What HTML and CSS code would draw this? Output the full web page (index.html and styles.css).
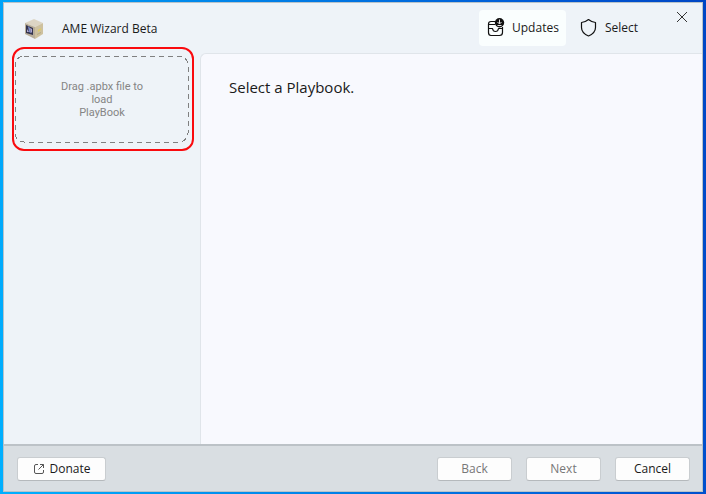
FILE: index.html
```html
<!DOCTYPE html>
<html lang="en">
<head>
<meta charset="utf-8">
<meta name="viewport" content="width=device-width, initial-scale=1">
<title>AME Wizard Beta</title>
<link rel="stylesheet" href="styles.css">
</head>
<body>
<div class="window">
  <div class="main">
    <aside class="sidebar">
      <header class="brand">
        <svg class="brand-icon" viewBox="0 0 20 20" aria-hidden="true">
          <path fill="#ddd5c4" d="M10 0 19 4 11 8 1 4z"/>
          <path fill="#b9ae99" d="M1 4 11 8 11 20 1 15z"/>
          <path fill="#cec19f" d="M11 8 19 4 19 15 11 20z"/>
          <path fill="#34344e" d="M2 6 9 9 9 16 2 14z"/>
          <path fill="#7d8dcc" d="M4 7 6 9 7 14 5 13z"/>
          <path fill="#b0a9cf" d="M6 9 8 10 8 13 7 14zM3 10 5 13 3 13z"/>
          <path fill="#ddcb68" d="M14 11 17 9 17 11 14 13z"/>
          <path fill="#b5a982" d="M13 15 17 13 17 14 13 16z"/>
        </svg>
        <span>AME Wizard Beta</span>
      </header>
      <div class="highlight">
        <div class="dropzone">
          <svg class="dropzone-outline" aria-hidden="true"><rect width="100%" height="100%" rx="9"/></svg>
          <p>Drag .apbx file to<br>load<br>PlayBook</p>
        </div>
      </div>
    </aside>
    <div class="workspace">
      <nav class="toolbar">
        <button class="tool active" type="button">
          <svg class="tool-icon" viewBox="0 0 18 20" aria-hidden="true">
            <g fill="none" stroke="#111" stroke-width="1.2" stroke-linejoin="round">
              <path d="M8 3.500H4Q1.500 3.500 1.500 6V14.500Q1.500 17.500 4 17.500H12.500Q15.500 17.500 15.500 14.500V9"/>
              <path d="M2 6.500H8M1.500 10.500H5.500Q6 13.500 8.500 13.500T11.500 10.500H15.500"/>
            </g>
            <circle cx="12.500" cy="4.700" r="4.700" fill="#111"/>
            <path d="M12.500 1.500V5.500M10.500 4 12.500 6 14.500 4M10.500 7.500H14.500" fill="none" stroke="#fff" stroke-width="0.900"/>
          </svg>
          <span>Updates</span>
        </button>
        <button class="tool" type="button">
          <svg class="tool-icon" viewBox="0 0 18 20" aria-hidden="true">
            <path fill="none" stroke="#111" stroke-width="1.200" stroke-linejoin="round" d="M8.500 1.500Q11.500 4 15.500 4.500V9.500Q15.500 15 8.500 18Q1.500 15 1.500 9.500V4.500Q5.500 4 8.500 1.500z"/>
          </svg>
          <span>Select</span>
        </button>
        <button class="close" type="button" aria-label="Close">
          <svg viewBox="0 0 12 12" aria-hidden="true"><path d="M1 1 11 11M11 1 1 11"/></svg>
        </button>
      </nav>
      <main class="content"><h1>Select a Playbook.</h1></main>
    </div>
  </div>
  <footer class="footer">
    <button class="btn donate" type="button">
      <svg class="link-icon" viewBox="0 0 12 12" aria-hidden="true"><path d="M5 1.500H3Q1.500 1.500 1.500 3V9Q1.500 10.500 3 10.500H9Q10.500 10.500 10.500 9V7M7 1.500H10.500V5M10.500 1.500 5.500 6.500"/></svg>
      <span>Donate</span>
    </button>
    <button class="btn" type="button" disabled>Back</button>
    <button class="btn" type="button" disabled>Next</button>
    <button class="btn" type="button">Cancel</button>
  </footer>
</div>
</body>
</html>
```
FILE: styles.css
```css
* { box-sizing: border-box; }

body {
  margin: 0;
  min-height: 100vh;
  display: flex;
  padding: 2px 3px;
  background: linear-gradient(80deg, #00b0ff 0%, #008eee 30%, #0058d4 80%, #0046c4 100%);
  color: #1a1a1a;
  font: 12px/16px "Open Sans", "Noto Sans", sans-serif;
}

button {
  font: inherit;
  color: inherit;
  border: 0;
  padding: 0;
  background: none;
}

.window {
  flex: 1;
  display: flex;
  flex-direction: column;
  border: 1px solid #b9c3c9;
  background: #eef3f8;
}

.main {
  flex: 1;
  display: grid;
  grid-template-columns: 196px 1fr;
}

.brand {
  height: 44px;
  padding: 8px 0 0 20px;
  display: flex;
  align-items: center;
  gap: 18px;
}

.brand-icon { width: 20px; height: 20px; }

.highlight {
  margin: 0 6px 0 8px;
  padding: 7px 3px 6px 1px;
  border: 2px solid #fa0a0e;
  border-radius: 12px;
}

.dropzone {
  position: relative;
  height: 87px;
  display: grid;
  place-items: center;
  color: #858585;
  font-family: Roboto, "Open Sans", sans-serif;
  font-size: 11px;
  line-height: 13px;
  text-align: center;
}

.dropzone p { margin: 0; }

.dropzone-outline {
  position: absolute;
  inset: 0;
  width: calc(100% - 1px);
  height: calc(100% - 1px);
  overflow: visible;
}

.dropzone-outline rect {
  fill: none;
  stroke: #808080;
  stroke-width: 1;
  stroke-dasharray: 5 4;
  shape-rendering: crispEdges;
}

.workspace { display: flex; flex-direction: column; }

.toolbar {
  height: 50px;
  display: flex;
  align-items: center;
  justify-content: flex-end;
  gap: 6px;
}

.tool {
  height: 36px;
  padding: 0 7px 0 8px;
  display: flex;
  align-items: center;
  gap: 7px;
  border-radius: 4px;
}

.tool.active { background: #fafefe; }
.tool-icon { width: 18px; height: 20px; }

.close {
  width: 40px;
  height: 28px;
  margin-left: 11px;
  align-self: flex-start;
  display: grid;
  place-items: center;
}

.close svg { width: 12px; height: 12px; }
.close path { stroke: #333; stroke-width: 1; }

.content {
  flex: 1;
  padding: 21px 28px;
  border: 1px solid #e0e5ea;
  border-width: 1px 0 0 1px;
  border-top-left-radius: 6px;
  background: #f8f9fe;
}

.content h1 {
  margin: 0;
  font-size: 15px;
  line-height: 24px;
  font-weight: 400;
}

.footer {
  height: 47px;
  padding: 1px 12px 0 13px;
  display: flex;
  align-items: center;
  gap: 14px;
  border-top: 2px solid #bcc2c7;
  background: #d9dee2;
}

.btn {
  width: 75px;
  height: 24px;
  border: 1px solid #c9cdd0;
  border-bottom-color: #b5b9bc;
  border-radius: 3px;
  background: #fdfdfd;
}

.btn:disabled { color: #777; }

.donate {
  width: 89px;
  margin-right: auto;
  display: flex;
  align-items: center;
  justify-content: center;
  gap: 5px;
}

.link-icon { width: 12px; height: 12px; }
.link-icon path { fill: none; stroke: #555; stroke-width: 1; }
```
